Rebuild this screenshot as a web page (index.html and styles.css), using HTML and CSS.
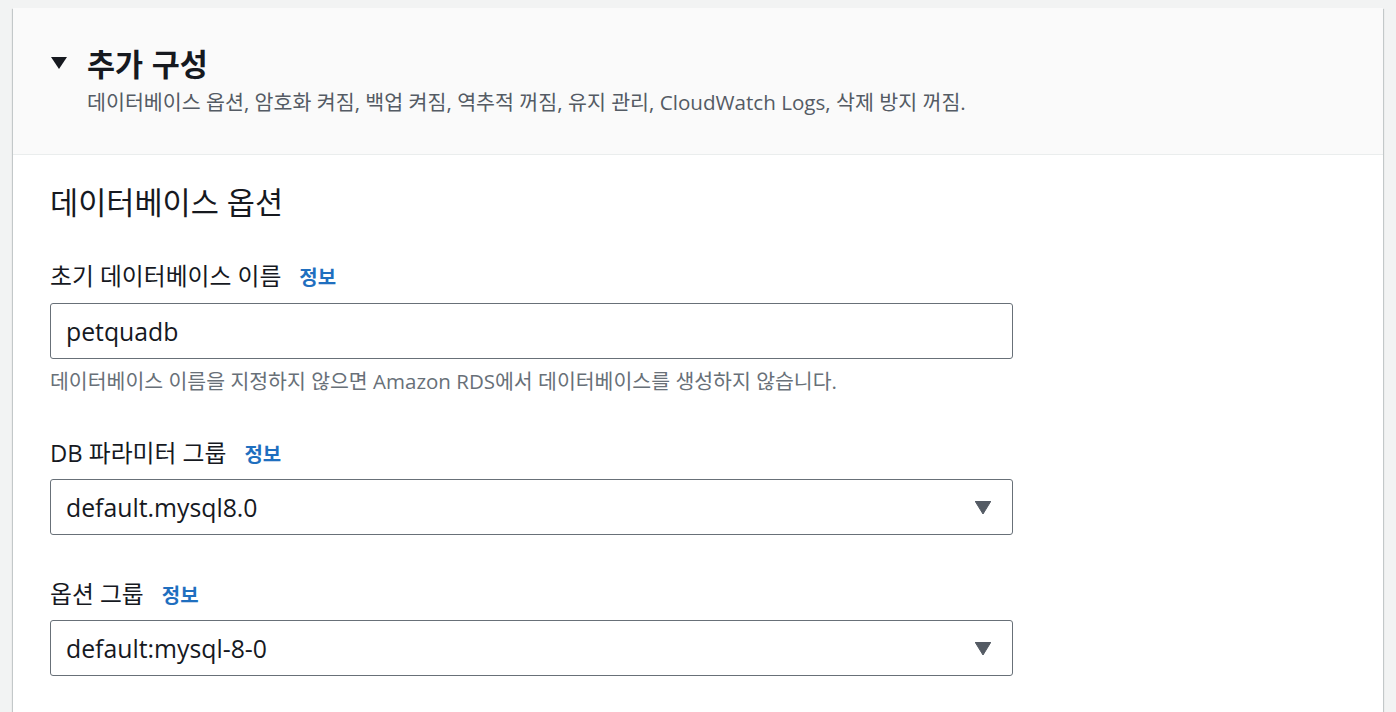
FILE: index.html
```html
<!DOCTYPE html>
<html lang="ko">
<head>
<meta charset="utf-8">
<title>추가 구성</title>
<link rel="stylesheet" href="styles.css">
</head>
<body>
<section class="card">
  <header class="card-header">
    <svg class="caret" width="16" height="12" viewBox="0 0 16 12"><path d="M0 0 H16 L8 12 Z" fill="#16191f"/></svg>
    <div class="header-text">
      <h1 class="title">추가 구성</h1>
      <p class="desc">데이터베이스 옵션, 암호화 켜짐, 백업 켜짐, 역추적 꺼짐, 유지 관리, CloudWatch Logs, 삭제 방지 꺼짐.</p>
    </div>
  </header>
  <div class="card-body">
    <h2 class="section-title">데이터베이스 옵션</h2>

    <div class="field first">
      <div class="label"><span>초기 데이터베이스 이름</span><a class="info">정보</a></div>
      <div class="control">petquadb</div>
      <div class="help">데이터베이스 이름을 지정하지 않으면 Amazon RDS에서 데이터베이스를 생성하지 않습니다.</div>
    </div>

    <div class="field">
      <div class="label"><span>DB 파라미터 그룹</span><a class="info">정보</a></div>
      <div class="control select">default.mysql8.0
        <svg class="sel-caret" width="16" height="13" viewBox="0 0 16 13"><path d="M0 0 H16 L8 13 Z" fill="#545b64" stroke="#545b64" stroke-linejoin="round" stroke-width="1"/></svg>
      </div>
    </div>

    <div class="field">
      <div class="label"><span>옵션 그룹</span><a class="info">정보</a></div>
      <div class="control select">default:mysql-8-0
        <svg class="sel-caret" width="16" height="13" viewBox="0 0 16 13"><path d="M0 0 H16 L8 13 Z" fill="#545b64" stroke="#545b64" stroke-linejoin="round" stroke-width="1"/></svg>
      </div>
    </div>
  </div>
</section>
</body>
</html>
```

FILE: styles.css
```css
html, body {
  margin: 0;
  padding: 0;
  background: #f2f3f3;
}
body {
  padding: 8px 13px 0 13px;
  font-family: "Open Sans", "Noto Sans CJK KR", sans-serif;
  color: #16191f;
}
.card {
  background: #ffffff;
  box-shadow: 0 1px 1px 0 rgba(0, 28, 36, 0.3), 1px 1px 1px 0 rgba(0, 28, 36, 0.15), -1px 1px 1px 0 rgba(0, 28, 36, 0.15);
  min-height: 720px;
}
.card-header {
  background: #fafafa;
  border-bottom: 1px solid #eaeded;
  display: flex;
  align-items: flex-start;
  padding: 37px 20px 38px 38px;
  height: 71px;
}
.caret {
  margin-top: 12px;
  margin-right: 20px;
  flex: none;
}
.title {
  margin: 0;
  font-size: 30.5px;
  line-height: 36px;
  font-weight: 700;
  font-family: "Noto Sans CJK KR", sans-serif;
}
.desc {
  margin: 8px 0 0 0;
  font-size: 20.6px;
  line-height: 26px;
  color: #545b64;
}
.card-body {
  padding: 29px 36px 0 37px;
}
.section-title {
  margin: 0;
  font-size: 30.6px;
  line-height: 36px;
  font-weight: 400;
}
.field {
  margin-top: 45px;
}
.field.first {
  margin-top: 42px;
}
.label {
  display: flex;
  align-items: baseline;
  height: 28px;
  font-size: 23.8px;
  line-height: 28px;
}
.info {
  color: #1f6fbf;
  font-weight: 700;
  font-size: 20px;
  margin-left: 18px;
}
.control {
  margin-top: 13px;
  width: 963px;
  height: 56px;
  box-sizing: border-box;
  border: 1px solid #687078;
  border-radius: 3px;
  display: flex;
  align-items: center;
  padding: 0 15px;
  font-size: 24.8px;
  background: #fff;
}
.select {
  margin-top: 12px;
  justify-content: space-between;
  padding-right: 21px;
}
.help {
  margin-top: 9px;
  font-size: 20.5px;
  line-height: 26px;
  color: #687078;
}
```
